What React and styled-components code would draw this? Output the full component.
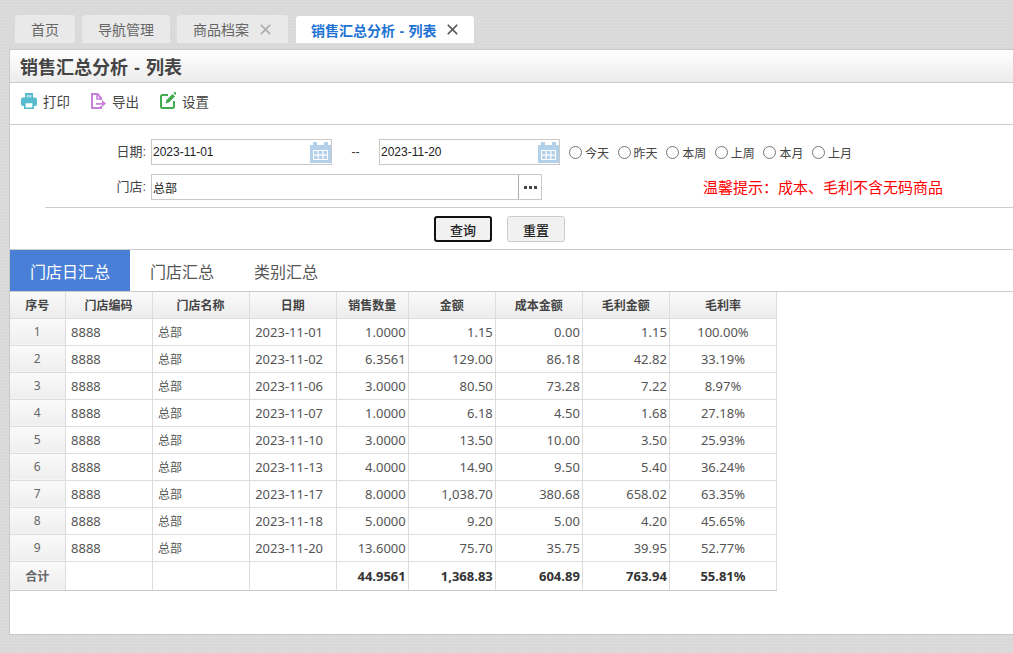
import React from 'react';
import styled, { createGlobalStyle } from 'styled-components';
import { X } from 'lucide-react';

const cjk = '"Noto Sans CJK SC", sans-serif';

const GlobalStyle = createGlobalStyle`
  html, body { margin: 0; padding: 0; height: 100%; overflow: hidden; }
  body {
    font-family: "Liberation Sans", ${cjk};
    font-size: 12px;
    color: #444;
    background-color: #dadada;
    background-image:
      repeating-linear-gradient(0deg, rgba(255, 255, 255, .08) 0 1px, transparent 1px 3px),
      repeating-linear-gradient(90deg, rgba(0, 0, 0, .015) 0 1px, transparent 1px 3px);
  }
`;

const Page = styled.div`
  width: 1013px;
  height: 653px;
  overflow: hidden;
`;

const TabBar = styled.div`
  height: 43px;
  padding: 0 0 6px 15px;
  display: flex;
  align-items: flex-end;
  gap: 7px;
`;

const PageTab = styled.div`
  height: ${p => (p.$active ? 27 : 28)}px;
  box-sizing: border-box;
  display: flex;
  align-items: center;
  padding-left: ${p => (p.$active ? 15 : 16)}px;
  gap: 8px;
  width: ${p => p.$width}px;
  margin-left: ${p => (p.$active ? 1 : 0)}px;
  border-radius: 3px 3px 0 0;
  background: ${p => (p.$active ? '#fff' : '#e9e9e9')};
  color: ${p => (p.$active ? '#1f74d3' : '#666')};
  font-size: 14px;
  font-weight: ${p => (p.$active ? 700 : 400)};
  word-spacing: .5px;
`;

const Close = styled(X)`
  color: ${p => (p.$dark ? '#555' : '#aaa')};
`;

const Panel = styled.div`
  margin-left: 9px;
  height: 586px;
  box-sizing: border-box;
  background: #fff;
  border: 1px solid #c8c8c8;
  border-right: 0;
  display: flex;
  flex-direction: column;
`;

const TitleBar = styled.div`
  height: 32px;
  flex: none;
  padding-left: 10px;
  display: flex;
  align-items: center;
  background: linear-gradient(#fff, #ececec);
  border-bottom: 1px solid #ccc;
  font-size: 18px;
  font-weight: 700;
  word-spacing: 1px;
  color: #444;
`;

const Toolbar = styled.div`
  height: 41px;
  flex: none;
  padding-left: 11px;
  display: flex;
  align-items: flex-start;
  gap: 21px;
  border-bottom: 1px solid #ccc;
`;

const ToolButton = styled.div`
  display: flex;
  align-items: center;
  gap: 6px;
  height: 35px;
  font-size: 13.5px;
  color: #444;
`;

const Form = styled.div`
  height: 125px;
  flex: none;
  box-sizing: border-box;
  padding-top: 14px;
  border-bottom: 1px solid #ccc;
`;

const FormRow = styled.div`
  display: flex;
  align-items: center;
  height: 26px;
  margin-bottom: ${p => p.$gap}px;
`;

const Label = styled.div`
  width: 141px;
  text-align: right;
  padding: 0 5px 3px 0;
  box-sizing: border-box;
  font-size: 13px;
  color: #444;
`;

const Field = styled.div`
  width: ${p => p.$width}px;
  height: 26px;
  box-sizing: border-box;
  border: 1px solid #c8c8c8;
  display: flex;
  align-items: center;
  justify-content: space-between;
  padding-left: 1px;
  font-size: 12px;
  color: #222;
`;

const CalendarButton = styled.span`
  display: flex;
`;

const Dash = styled.div`
  width: 47px;
  text-align: center;
  font-size: 12px;
  color: #333;
`;

const RadioGroup = styled.div`
  display: flex;
  align-items: center;
  margin-left: 9px;
  gap: 8.6px;
`;

const RadioLabel = styled.label`
  display: flex;
  align-items: center;
  gap: 3px;
  font-size: 12px;
  color: #444;
  input { margin: 1px 0 0; width: 13px; height: 13px; }
`;

const MoreButton = styled.div`
  width: 23px;
  height: 24px;
  box-sizing: border-box;
  border-left: 1px solid #aaa;
  display: flex;
  align-items: center;
  justify-content: center;
  gap: 2px;
`;

const Dot = styled.i`
  width: 3px;
  height: 3px;
  background: #444;
`;

const Tip = styled.div`
  margin-left: 161px;
  padding-bottom: 2px;
  font-size: 15px;
  color: #f00;
`;

const Actions = styled.div`
  margin-left: 35px;
  border-top: 1px solid #ccc;
  padding-top: 8px;
  padding-left: 389px;
  display: flex;
  gap: 15px;
`;

const Button = styled.button`
  width: ${p => p.$width}px;
  height: 26px;
  padding: 0;
  box-sizing: border-box;
  border-radius: 3px;
  background: #f1f1f1;
  color: #222;
  font-family: "Liberation Sans", ${cjk};
  font-size: 13px;
  font-weight: 500;
  border: ${p => (p.$focused ? '2px solid #111' : '1px solid #ccc')};
`;

const TabStrip = styled.div`
  height: 42px;
  flex: none;
  box-sizing: border-box;
  display: flex;
  border-bottom: 1px solid #ccc;
`;

const Tab = styled.div`
  display: flex;
  align-items: center;
  justify-content: center;
  width: ${p => p.$width}px;
  font-size: 16px;
  background: ${p => (p.$active ? '#4a7fd8' : 'transparent')};
  color: ${p => (p.$active ? '#fff' : '#555')};
`;

const Table = styled.table`
  border-collapse: collapse;
  table-layout: fixed;
  width: 767px;
  font-size: 12px;
  color: #555;
  font-family: "Noto Sans", ${cjk};
`;

const HeadCell = styled.th`
  height: 26px;
  padding: 0;
  box-sizing: border-box;
  border: 1px solid #ddd;
  border-top: 0;
  border-left: ${p => (p.$first ? 0 : '1px solid #ddd')};
  background: linear-gradient(#fafafa, #ececec);
  font-weight: 700;
  color: #444;
`;

const IndexCell = styled.td`
  height: 27px;
  padding: 0;
  box-sizing: border-box;
  border: 1px solid #ddd;
  border-left: 0;
  text-align: center;
  background: linear-gradient(#fafafa, #eee);
  color: #666;
  font-weight: ${p => (p.$bold ? 700 : 400)};
`;

const Cell = styled.td`
  padding: ${p => (p.$align === 'right' ? '0 2px 0 0' : p.$align === 'center' ? 0 : '0 0 0 5.500px')};
  border: 1px solid #ddd;
  text-align: ${p => p.$align || 'left'};
  font-weight: ${p => (p.$bold ? 700 : 400)};
  color: ${p => (p.$bold ? '#333' : '#555')};
  font-size: ${p => (p.$latin ? 13 : 12)}px;
`;

const TotalRow = styled.tr`
  height: 29px;
  td, td:first-child { border-bottom: 1px solid #ccc; }
`;

const Calendar = () => (
  <CalendarButton>
    <svg width="21" height="21" viewBox="0 0 21 21">
      <path d="M0 3h3V0h4v3h7V0h4v3h3v18H0z" fill="#b3d0ea" />
      <path d="M3 8h15v10H3z" fill="#fff" />
      <path d="M4 9h3.500v3.500H4zM8.700 9h3.600v3.500H8.700zM13.500 9H17v3.500h-3.500zM4 13.700h3.500V17H4zM8.700 13.700h3.600V17H8.700zM13.500 13.700H17V17h-3.500z" fill="#b3d0ea" />
    </svg>
  </CalendarButton>
);

const PrintIcon = () => (
  <svg width="16" height="16" viewBox="0 0 16 16">
    <path d="M4 0h8v5H4z" fill="#56bccd" />
    <rect y="4.500" width="16" height="8.500" rx="2" fill="#56bccd" />
    <path d="M3.800 9.500h8.400v5.700H3.800z" fill="#fff" stroke="#56bccd" strokeWidth="1.600" />
    <path d="M5.500 2h5v2.500h-5z" fill="#a9dfe7" />
  </svg>
);

const ExportIcon = () => (
  <svg width="15" height="16" viewBox="0 0 15 16">
    <path d="M10 7V5L6.500 1H1v14h9v-2" fill="none" stroke="#c97fdc" strokeWidth="2" />
    <path d="M6 1v5h4" fill="none" stroke="#c97fdc" strokeWidth="1.600" />
    <path d="M5 10h6V7l4 3.500-4 3.500v-2.200H5z" fill="#c97fdc" />
  </svg>
);

const EditIcon = () => (
  <svg width="16" height="17" viewBox="0 0 16 17">
    <path d="M14 9v5.500a1.500 1.500 0 0 1-1.500 1.500h-10A1.500 1.500 0 0 1 1 14.500v-10A1.500 1.500 0 0 1 2.500 3H8" fill="none" stroke="#43ab4f" strokeWidth="2" />
    <path d="M5.500 11.500l1-3.500L12.500 2l2.500 2.500-6 6z" fill="#43ab4f" />
    <path d="M13.500 1l.7-.7a1 1 0 0 1 1.400 0l.4.400v1.600l-.7.7z" fill="#43ab4f" />
  </svg>
);

const columns = [
  { title: '门店编码', width: 87 },
  { title: '门店名称', width: 97 },
  { title: '日期', width: 87 },
  { title: '销售数量', width: 72 },
  { title: '金额', width: 87 },
  { title: '成本金额', width: 87 },
  { title: '毛利金额', width: 87 },
  { title: '毛利率', width: 107 },
];

const rows = [
  ['2023-11-01', '1.0000', '1.15', '0.00', '1.15', '100.00%'],
  ['2023-11-02', '6.3561', '129.00', '86.18', '42.82', '33.19%'],
  ['2023-11-06', '3.0000', '80.50', '73.28', '7.22', '8.97%'],
  ['2023-11-07', '1.0000', '6.18', '4.50', '1.68', '27.18%'],
  ['2023-11-10', '3.0000', '13.50', '10.00', '3.50', '25.93%'],
  ['2023-11-13', '4.0000', '14.90', '9.50', '5.40', '36.24%'],
  ['2023-11-17', '8.0000', '1,038.70', '380.68', '658.02', '63.35%'],
  ['2023-11-18', '5.0000', '9.20', '5.00', '4.20', '45.65%'],
  ['2023-11-20', '13.6000', '75.70', '35.75', '39.95', '52.77%'],
];

const ranges = ['今天', '昨天', '本周', '上周', '本月', '上月'];

const App = () => (
  <Page>
    <GlobalStyle />
    <TabBar>
      <PageTab $width={60}>首页</PageTab>
      <PageTab $width={88}>导航管理</PageTab>
      <PageTab $width={111}>商品档案<Close size={17} strokeWidth={2.4} /></PageTab>
      <PageTab $width={178} $active>销售汇总分析 - 列表<Close size={17} strokeWidth={2.4} $dark /></PageTab>
    </TabBar>
    <Panel>
      <TitleBar>销售汇总分析 - 列表</TitleBar>
      <Toolbar>
        <ToolButton><PrintIcon />打印</ToolButton>
        <ToolButton><ExportIcon />导出</ToolButton>
        <ToolButton><EditIcon />设置</ToolButton>
      </Toolbar>
      <Form>
        <FormRow $gap={9}>
          <Label>日期:</Label>
          <Field $width={181}>2023-11-01<Calendar /></Field>
          <Dash>--</Dash>
          <Field $width={181}>2023-11-20<Calendar /></Field>
          <RadioGroup>
            {ranges.map(r => (
              <RadioLabel key={r}><input type="radio" name="range" />{r}</RadioLabel>
            ))}
          </RadioGroup>
        </FormRow>
        <FormRow $gap={7}>
          <Label>门店:</Label>
          <Field $width={391}>总部<MoreButton><Dot /><Dot /><Dot /></MoreButton></Field>
          <Tip>温馨提示：成本、毛利不含无码商品</Tip>
        </FormRow>
        <Actions>
          <Button $width={58} $focused>查询</Button>
          <Button $width={58}>重置</Button>
        </Actions>
      </Form>
      <TabStrip>
        <Tab $width={120} $active>门店日汇总</Tab>
        <Tab $width={104}>门店汇总</Tab>
        <Tab $width={104}>类别汇总</Tab>
      </TabStrip>
      <Table>
        <colgroup>
          <col width="55" />
          {columns.map(c => <col key={c.title} width={c.width} />)}
        </colgroup>
        <thead>
          <tr>
            <HeadCell $first>序号</HeadCell>
            {columns.map(c => <HeadCell key={c.title}>{c.title}</HeadCell>)}
          </tr>
        </thead>
        <tbody>
          {rows.map((r, i) => (
            <tr key={r[0]}>
              <IndexCell>{i + 1}</IndexCell>
              <Cell $latin>8888</Cell>
              <Cell>总部</Cell>
              <Cell $latin>{r[0]}</Cell>
              <Cell $latin $align="right">{r[1]}</Cell>
              <Cell $latin $align="right">{r[2]}</Cell>
              <Cell $latin $align="right">{r[3]}</Cell>
              <Cell $latin $align="right">{r[4]}</Cell>
              <Cell $latin $align="center">{r[5]}</Cell>
            </tr>
          ))}
          <TotalRow>
            <IndexCell $bold>合计</IndexCell>
            <Cell /><Cell /><Cell />
            <Cell $latin $bold $align="right">44.9561</Cell>
            <Cell $latin $bold $align="right">1,368.83</Cell>
            <Cell $latin $bold $align="right">604.89</Cell>
            <Cell $latin $bold $align="right">763.94</Cell>
            <Cell $latin $bold $align="center">55.81%</Cell>
          </TotalRow>
        </tbody>
      </Table>
    </Panel>
  </Page>
);

export default App;
